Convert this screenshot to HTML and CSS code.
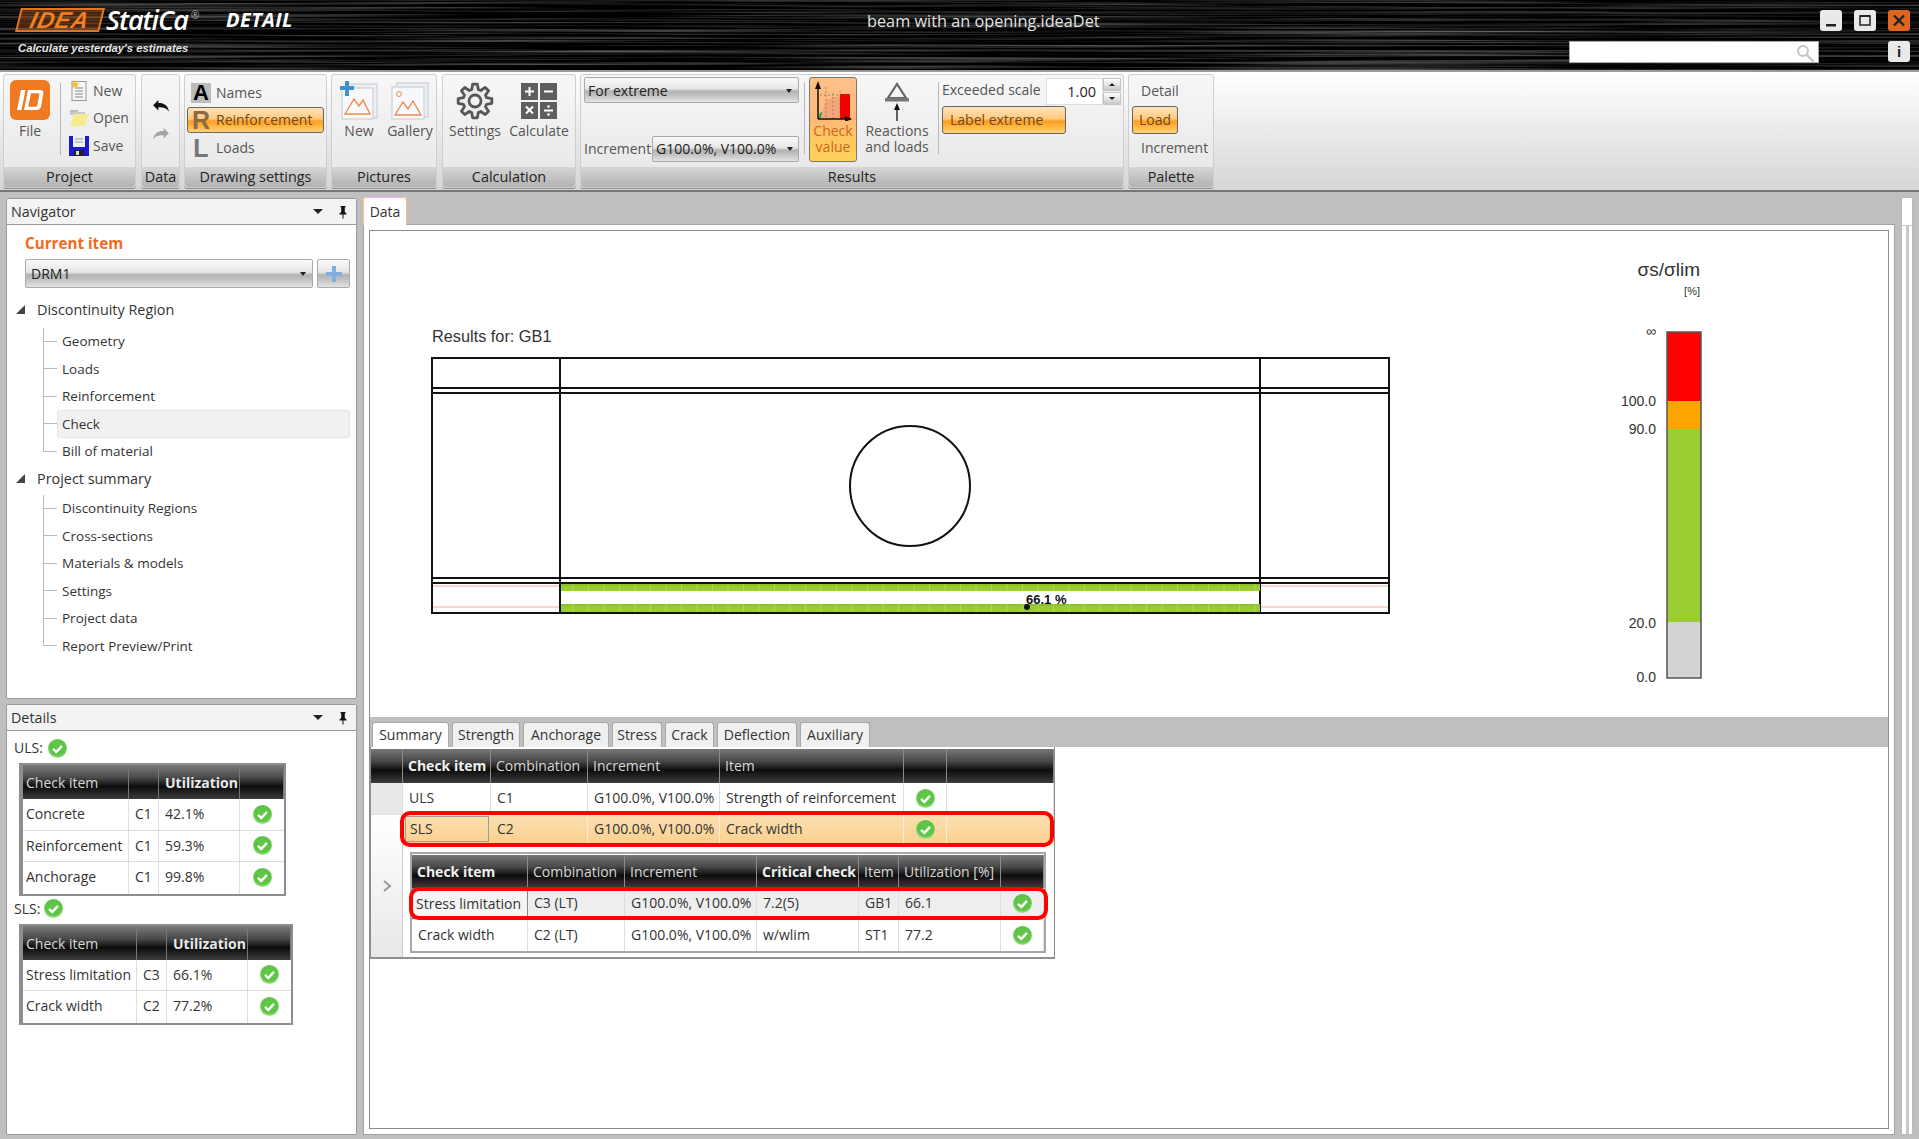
FILE: index.html
```html
<!DOCTYPE html>
<html lang="en">
<head>
<meta charset="utf-8">
<title>beam with an opening.ideaDet</title>
<link rel="stylesheet" href="styles.css">
</head>
<body>
<svg class="defs" width="0" height="0" aria-hidden="true">
  <defs>
    <radialGradient id="okFill" cx="50%" cy="42%" r="58%">
      <stop offset="0" stop-color="#62c74a"/><stop offset=".72" stop-color="#5cc444"/><stop offset="1" stop-color="#a8e298"/>
    </radialGradient>
    <symbol id="ok" viewBox="0 0 20 20">
      <circle cx="10" cy="10" r="10" fill="url(#okFill)"/>
      <path d="M5.300 10.300l3.400 3.400 6-6.500" fill="none" stroke="#fff" stroke-width="2.600"/>
    </symbol>
    <symbol id="pin" viewBox="0 0 10 14">
      <path d="M2.500 1h5v1l-.7.5v4.500l1.700 1.500v1h-3v4h-1v-4h-3v-1l1.700-1.500v-4.500l-.7-.5z" fill="#111"/>
    </symbol>
    <pattern id="bar" width="15.500" height="10" patternUnits="userSpaceOnUse">
      <rect width="15.500" height="10" fill="#9acd32"/>
      <rect y="3" width="15.500" height="3" fill="#8fc02c"/>
      <rect x="15" width=".6" height="10" fill="#c4e28a"/>
    </pattern>
    <filter id="streak" x="0" y="0" width="100%" height="100%" color-interpolation-filters="sRGB">
      <feTurbulence type="fractalNoise" baseFrequency="0.0025 0.42" numOctaves="3" seed="7"/>
      <feColorMatrix type="matrix" values="0.8 0 0 0 -0.34  0.8 0 0 0 -0.34  0.8 0 0 0 -0.34  0 0 0 0 1"/>
    </filter>
  </defs>
</svg>
<div class="app">
  <header class="titlebar">
    <svg class="streaks" width="1919" height="70" aria-hidden="true"><rect width="1919" height="70" filter="url(#streak)"/></svg>
    <div class="brand">
      <div class="brand-top">
        <span class="idea-box"><span class="idea-text">IDEA</span></span>
        <span class="statica">StatiCa<sup class="reg">®</sup></span>
        <span class="detail">DETAIL</span>
      </div>
      <div class="tagline">Calculate yesterday's estimates</div>
    </div>
    <div class="doc-title">beam with an opening.ideaDet</div>
    <div class="window-tools">
      <div class="win-row">
        <span class="win-btn"><svg width="22" height="21" viewBox="0 0 22 21"><rect x="6" y="14" width="10" height="2.500" fill="#222"/></svg></span>
        <span class="win-btn"><svg width="22" height="21" viewBox="0 0 22 21"><rect x="6" y="6" width="10" height="9" fill="none" stroke="#222" stroke-width="1.500"/><rect x="6" y="5" width="10" height="2" fill="#222"/></svg></span>
        <span class="win-btn close"><svg width="22" height="21" viewBox="0 0 22 21"><path d="M6 5.500l10 10M16 5.500l-10 10" stroke="#222" stroke-width="2.400"/></svg></span>
      </div>
      <div class="win-row lower">
        <div class="search"><svg width="22" height="21" viewBox="0 0 22 21"><circle cx="9" cy="9" r="5" fill="none" stroke="#c4c4c4" stroke-width="2"/><path d="M12.500 12.500l7 7" stroke="#c4c4c4" stroke-width="2.200"/></svg></div>
        <span class="win-btn info">i</span>
      </div>
    </div>
  </header>

  <section class="ribbon">
    <div class="group g-project">
      <div class="group-body project-body">
        <div class="file-btn">
          <span class="file-icon"><svg width="30" height="24" viewBox="0 0 30 24"><path d="M6 2h4.500L6.500 22H2zM13 2h12q4 0 3.200 4l-2 12q-.8 4-4.700 4H9zm3 3.200l-2.800 13.600h7.300q1.500 0 1.800-1.500l2-10.500q.3-1.600-1.300-1.600z" fill="#fff"/></svg></span>
          <span class="file-label">File</span>
        </div>
        <div class="vsep project-sep"></div>
        <div class="cmd-list">
          <div class="cmd"><svg width="18" height="22" viewBox="0 0 18 22"><rect x="2" y="1.500" width="14" height="19" fill="#f6f6f6" stroke="#999"/><path d="M5 8h8M5 11h8M5 14h8M5 17h8" stroke="#888"/><path d="M5 0l1.300 3 3 .3-2.300 2 .8 3L5 6.700 2.200 8.300l.8-3-2.300-2 3-.3z" fill="#f6c02c"/></svg><span>New</span></div>
          <div class="cmd"><svg width="20" height="18" viewBox="0 0 20 18"><path d="M1 1h8v3H1z" fill="#bdbdbd"/><path d="M1 3h15v3H1z" fill="#c9c9c9"/><path d="M5 5h15l-4 12H1z" fill="#f7ec8d"/></svg><span>Open</span></div>
          <div class="cmd"><svg width="20" height="20" viewBox="0 0 20 20"><rect width="20" height="20" fill="#1a1ad0"/><rect x="4" y="0" width="12" height="11" fill="#f0f0f0"/><path d="M6 3h8M6 6h8" stroke="#999"/><rect x="5" y="14" width="10" height="6" fill="#222"/><rect x="7" y="15" width="3" height="4" fill="#ddd"/></svg><span>Save</span></div>
        </div>
      </div>
      <div class="group-label">Project</div>
    </div>

    <div class="group g-data">
      <div class="group-body data-body">
        <svg width="18" height="14" viewBox="0 0 20 16"><path d="M1 7l6-6v3.500c7 0 11 3 12 10-2.500-4-6-5-12-5V13z" fill="#111"/></svg>
        <svg width="18" height="14" viewBox="0 0 20 16"><path d="M19 7l-6-6v3.500C6 4.500 2 7.500 1 14.500c2.500-4 6-5 12-5V13z" fill="#a4a4a4"/></svg>
      </div>
      <div class="group-label">Data</div>
    </div>

    <div class="group g-drawing">
      <div class="group-body drawing-body">
        <div class="draw-row"><span class="letter letter-a">A</span><span>Names</span></div>
        <div class="draw-row hot"><span class="letter">R</span><span>Reinforcement</span></div>
        <div class="draw-row"><span class="letter">L</span><span>Loads</span></div>
      </div>
      <div class="group-label">Drawing settings</div>
    </div>

    <div class="group g-pictures">
      <div class="group-body big-row pictures-body">
        <div class="big-btn">
          <svg width="40" height="40" viewBox="0 0 40 40"><rect x="9" y="3" width="29" height="34" fill="#eef0f4" stroke="#c3c8d2"/><rect x="3" y="7" width="31" height="31" fill="#f7f8fa" stroke="#c3c8d2"/><path d="M6 33l9-15 5 7 4-6 7 14z" fill="none" stroke="#ef8a55" stroke-width="1.400"/><path d="M6 6h5V1h4v5h5v4h-5v6h-4v-6H6z" fill="#3f8fcf" transform="translate(-5 -1)"/></svg>
          <span class="big-label">New</span>
        </div>
        <div class="big-btn">
          <svg width="40" height="40" viewBox="0 0 40 40"><rect x="7" y="2" width="31" height="34" fill="#eef0f4" stroke="#c3c8d2"/><rect x="2" y="6" width="32" height="32" fill="#f7f8fa" stroke="#c3c8d2"/><circle cx="9" cy="13" r="2.500" fill="none" stroke="#ef8a55"/><path d="M5 34l8-13 5 7 5-8 8 14z" fill="none" stroke="#ef8a55" stroke-width="1.400"/></svg>
          <span class="big-label">Gallery</span>
        </div>
      </div>
      <div class="group-label">Pictures</div>
    </div>

    <div class="group g-calc">
      <div class="group-body big-row calc-body">
        <div class="big-btn">
          <svg width="40" height="40" viewBox="0 0 40 40"><path d="M16.690 8.460L17.630 3.160H22.370L23.310 8.460 25.820 9.500 30.230 6.420 33.580 9.770 30.500 14.180 31.540 16.690 36.840 17.630V22.370L31.540 23.310 30.500 25.820 33.580 30.230 30.230 33.580 25.820 30.500 23.310 31.540 22.370 36.840H17.630L16.690 31.540 14.180 30.500 9.770 33.580 6.420 30.230 9.500 25.820 8.460 23.310 3.160 22.370V17.630L8.460 16.690 9.500 14.180 6.420 9.770 9.770 6.420 14.180 9.500z" fill="#ececec" stroke="#575757" stroke-width="2.800" stroke-linejoin="round"/><circle cx="20" cy="20" r="6" fill="#f4f4f4" stroke="#575757" stroke-width="2.800"/></svg>
          <span class="big-label">Settings</span>
        </div>
        <div class="big-btn">
          <svg width="40" height="40" viewBox="0 0 40 40"><g fill="#5e5e5e"><rect x="2" y="2" width="17" height="17"/><rect x="21" y="2" width="17" height="17"/><rect x="2" y="21" width="17" height="17"/><rect x="21" y="21" width="17" height="17"/></g><path d="M6 10.500h9M10.500 6v9M25 10.500h9M7 25.500l7 7M14 25.500l-7 7M25 29.500h9" stroke="#fff" stroke-width="2"/><circle cx="29.500" cy="25.500" r="1.300" fill="#fff"/><circle cx="29.500" cy="33.500" r="1.300" fill="#fff"/></svg>
          <span class="big-label">Calculate</span>
        </div>
      </div>
      <div class="group-label">Calculation</div>
    </div>

    <div class="group g-results">
      <div class="group-body results-body">
        <div class="combo-col">
          <div class="combo combo-extreme"><span>For extreme</span><i class="caret"></i></div>
          <div class="inc-row"><span>Increment</span><div class="combo combo-inc"><span>G100.0%, V100.0%</span><i class="caret"></i></div></div>
        </div>
        <div class="vsep result-sep"></div>
        <div class="check-value">
          <svg width="38" height="40" viewBox="0 0 38 40"><path d="M6 32L4 38h7l-1-8z" fill="#12a04a"/><path d="M6 38l6-18 7-4h7v22z" fill="#f4a57a"/><rect x="26" y="13" width="10" height="25" fill="#f00000"/><path d="M6 14h30M12 6v32M19 12v26M26 10v28" stroke="#7a5a40" stroke-width=".6" stroke-dasharray="2 2"/><path d="M4 38V4M4 38h33" stroke="#111" stroke-width="1.500"/><path d="M4 0l-3 8h6zM38 38l-7-3v6z" fill="#111"/></svg>
          <span class="cv-label">Check value</span>
        </div>
        <div class="reactions">
          <svg width="26" height="40" viewBox="0 0 26 40"><path d="M13 2L4 16h18z" fill="none" stroke="#666" stroke-width="2.200"/><rect x="1" y="16" width="24" height="3.500" fill="#777"/><path d="M13 39V24" stroke="#111" stroke-width="1.300"/><path d="M13 21l-3 7h6z" fill="#111"/></svg>
          <span class="reactions-label">Reactions and loads</span>
        </div>
        <div class="vsep react-sep"></div>
        <div class="exceed">
          <div class="exceed-top">
            <span class="exceed-label">Exceeded scale</span>
            <div class="scale-input">1.00</div>
            <div class="spinner"><span class="spin"><i class="tri up"></i></span><span class="spin"><i class="tri"></i></span></div>
          </div>
          <div class="hot-btn label-extreme">Label extreme</div>
        </div>
      </div>
      <div class="group-label">Results</div>
    </div>

    <div class="group g-palette">
      <div class="group-body palette-body">
        <span class="pal-text">Detail</span>
        <div class="hot-btn load-btn">Load</div>
        <span class="pal-text">Increment</span>
      </div>
      <div class="group-label">Palette</div>
    </div>
  </section>

  <main class="workspace">
    <aside class="side">
      <section class="panel nav-panel">
        <div class="panel-head"><span>Navigator</span><i class="tri head-tri"></i><svg class="pin" width="10" height="14"><use href="#pin"/></svg></div>
        <div class="nav-body">
          <div class="current">Current item</div>
          <div class="current-row">
            <div class="combo combo-drm"><span>DRM1</span><i class="caret"></i></div>
            <div class="combo add-btn"><svg width="16" height="16" viewBox="0 0 16 16"><path d="M6 0h4v6h6v4h-6v6H6v-6H0V6h6z" fill="#7fb0e0"/></svg></div>
          </div>
          <div class="tree-head"><i class="expander"></i><span>Discontinuity Region</span></div>
          <ul class="tree-list">
            <li class="tree-item"><span>Geometry</span></li>
            <li class="tree-item"><span>Loads</span></li>
            <li class="tree-item"><span>Reinforcement</span></li>
            <li class="tree-item selected"><span>Check</span></li>
            <li class="tree-item last"><span>Bill of material</span></li>
          </ul>
          <div class="tree-head second"><i class="expander"></i><span>Project summary</span></div>
          <ul class="tree-list summary-list">
            <li class="tree-item"><span>Discontinuity Regions</span></li>
            <li class="tree-item"><span>Cross-sections</span></li>
            <li class="tree-item"><span>Materials &amp; models</span></li>
            <li class="tree-item"><span>Settings</span></li>
            <li class="tree-item"><span>Project data</span></li>
            <li class="tree-item last"><span>Report Preview/Print</span></li>
          </ul>
        </div>
      </section>
      <section class="panel details-panel">
        <div class="panel-head"><span>Details</span><i class="tri head-tri"></i><svg class="pin" width="10" height="14"><use href="#pin"/></svg></div>
        <div class="details-body">
          <div class="status">ULS: <svg class="ok big" width="19" height="19"><use href="#ok"/></svg></div>
          <div class="mini uls">
            <div class="mini-row head"><span>Check item</span><span></span><b>Utilization</b><span></span></div>
            <div class="mini-row"><span>Concrete</span><span class="c">C1</span><span>42.1%</span><span class="mid"><svg width="19" height="19"><use href="#ok"/></svg></span></div>
            <div class="mini-row"><span>Reinforcement</span><span class="c">C1</span><span>59.3%</span><span class="mid"><svg width="19" height="19"><use href="#ok"/></svg></span></div>
            <div class="mini-row"><span>Anchorage</span><span class="c">C1</span><span>99.8%</span><span class="mid"><svg width="19" height="19"><use href="#ok"/></svg></span></div>
          </div>
          <div class="status sls-status">SLS: <svg class="ok big" width="19" height="19"><use href="#ok"/></svg></div>
          <div class="mini sls">
            <div class="mini-row head"><span>Check item</span><span></span><b>Utilization</b><span></span></div>
            <div class="mini-row"><span>Stress limitation</span><span class="c">C3</span><span>66.1%</span><span class="mid"><svg width="19" height="19"><use href="#ok"/></svg></span></div>
            <div class="mini-row"><span>Crack width</span><span class="c">C2</span><span>77.2%</span><span class="mid"><svg width="19" height="19"><use href="#ok"/></svg></span></div>
          </div>
        </div>
      </section>
    </aside>

    <div class="center">
      <div class="data-tab">Data</div>
      <div class="data-frame">
        <div class="data-inner">
          <svg class="chart" width="1518" height="486" viewBox="370 231 1518 486">
            <text x="432" y="342" class="t-results">Results for: GB1</text>
            <g fill="none" stroke="#111" stroke-width="2">
              <rect x="432" y="358" width="957" height="255"/>
              <path d="M560 358V613M1260 358V613M432 388H1389M432 393H1389M432 578H1389M432 583H1389"/>
              <circle cx="910" cy="486" r="60"/>
            </g>
            <path d="M433 586H559M433 607H559M1261 586H1388M1261 607H1388" stroke="#f4c8c8" stroke-width="1.500"/>
            <rect x="561" y="584" width="699" height="7" fill="url(#bar)"/>
            <rect x="561" y="604" width="699" height="8" fill="url(#bar)"/>
            <circle cx="1027" cy="607" r="3" fill="#111"/>
            <text x="1026" y="604" class="t-extreme">66.1 %</text>
            <text x="1700" y="276" text-anchor="end" class="t-legend">σs/σlim</text>
            <text x="1700" y="295" text-anchor="end" class="t-unit">[%]</text>
            <g class="t-scale" text-anchor="end">
              <text x="1656" y="336">∞</text>
              <text x="1656" y="406">100.0</text>
              <text x="1656" y="434">90.0</text>
              <text x="1656" y="628">20.0</text>
              <text x="1656" y="682">0.0</text>
            </g>
            <rect x="1667" y="332" width="34" height="69" fill="#ff0000"/>
            <rect x="1667" y="401" width="34" height="28" fill="#ffa500"/>
            <rect x="1667" y="429" width="34" height="193" fill="#9acd32"/>
            <rect x="1667" y="622" width="34" height="56" fill="#d3d3d3"/>
            <rect x="1667" y="332" width="34" height="346" fill="none" stroke="#555" stroke-width="1.500"/>
          </svg>
          <nav class="tabs">
            <span class="tab active">Summary</span>
            <span class="tab t-strength">Strength</span>
            <span class="tab t-anchorage">Anchorage</span>
            <span class="tab t-stress">Stress</span>
            <span class="tab t-crack">Crack</span>
            <span class="tab t-deflection">Deflection</span>
            <span class="tab t-auxiliary">Auxiliary</span>
          </nav>
          <div class="grid-area">
            <div class="grid">
              <div class="g-row g-head g-top"><span></span><b>Check item</b><span>Combination</span><span>Increment</span><span>Item</span><span></span><span></span></div>
              <div class="g-row g-body"><span class="row-handle"></span><span>ULS</span><span>C1</span><span>G100.0%, V100.0%</span><span>Strength of reinforcement</span><span class="mid"><svg width="19" height="19"><use href="#ok"/></svg></span><span></span></div>
              <div class="g-expanded">
                <div class="expand-cell"><svg width="10" height="14" viewBox="0 0 10 14"><path d="M2 2l6 5-6 5" fill="none" stroke="#999" stroke-width="2"/></svg></div>
                <div class="expand-main">
                  <div class="g-row g-sel"><span class="sel-cell">SLS</span><span>C2</span><span>G100.0%, V100.0%</span><span>Crack width</span><span class="mid"><svg width="19" height="19"><use href="#ok"/></svg></span><span></span></div>
                  <div class="nested">
                    <div class="n-row g-head"><b>Check item</b><span>Combination</span><span>Increment</span><b>Critical check</b><span>Item</span><span>Utilization [%]</span><span></span></div>
                    <div class="n-row g-body n-sel"><span class="sel-cell">Stress limitation</span><span>C3 (LT)</span><span>G100.0%, V100.0%</span><span>7.2(5)</span><span>GB1</span><span>66.1</span><span class="mid"><svg width="19" height="19"><use href="#ok"/></svg></span></div>
                    <div class="n-row g-body n-last"><span>Crack width</span><span>C2 (LT)</span><span>G100.0%, V100.0%</span><span>w/wlim</span><span>ST1</span><span>77.2</span><span class="mid"><svg width="19" height="19"><use href="#ok"/></svg></span></div>
                  </div>
                </div>
              </div>
              <div class="red-box box-sls"></div>
              <div class="red-box box-stress"></div>
            </div>
          </div>
        </div>
      </div>
    </div>
    <div class="scrollbar"><span class="thumb"></span><span class="track-line"></span></div>
  </main>
</div>
</body>
</html>
```

FILE: styles.css
```css
* { box-sizing: border-box; }
html, body { margin: 0; padding: 0; }
body { background: #bfbfbf; font: 14px/18px "Open Sans", "Liberation Sans", sans-serif; color: #333; overflow: hidden; }
.defs { position: absolute; }
i { display: block; }
ul { list-style: none; margin: 0; padding: 0; }
svg { display: block; flex: none; }
.app { width: 1919px; height: 1139px; display: flex; flex-direction: column; overflow: hidden; }

/* title bar */
.titlebar { height: 72px; flex: none; display: flex; position: relative; border-bottom: 2px solid #9b9b9b; color: #f0f0f0; background: #0c0c0c; }
.streaks { position: absolute; left: 0; top: 0; }
.brand, .doc-title, .window-tools { position: relative; }
.brand { width: 867px; flex: none; padding: 8px 0 0 18px; }
.brand-top { display: flex; align-items: center; height: 24px; }
.idea-box { width: 84px; height: 24px; border: 2px solid #e8731f; transform: skewX(-14deg); display: flex; align-items: center; justify-content: center; background: rgba(232,115,31,.3); }
.idea-text { font: italic 900 23px/20px "Liberation Sans", sans-serif; letter-spacing: 1px; color: #f08024; }
.statica { font: italic 600 27px/24px "Open Sans", sans-serif; color: #fff; margin-left: 4px; letter-spacing: -1px; width: 120px; white-space: nowrap; }
.reg { font-size: 10px; line-height: 0; vertical-align: 11px; color: #bbb; margin-left: 3px; font-weight: 400; }
.detail { font: italic 700 20px/24px "Open Sans", sans-serif; color: #fff; letter-spacing: .4px; }
.tagline { margin-top: 9px; font: italic 700 11.3px/14px "Liberation Sans", sans-serif; color: #e6e6e6; }
.doc-title { width: 400px; flex: none; padding-top: 12px; font-size: 16.3px; color: #e4e4e4; white-space: nowrap; }
.window-tools { flex: 1; padding: 10px 9px 0 0; display: flex; flex-direction: column; align-items: flex-end; }
.win-row { display: flex; gap: 12px; }
.win-row.lower { margin-top: 10px; gap: 69px; }
.win-btn { width: 22px; height: 21px; background: #e9e9e9; border-radius: 3px; }
.win-btn.close { background: #e0651f; }
.win-btn.info { font: 700 15px/21px "Liberation Sans", sans-serif; text-align: center; color: #222; }
.search { width: 250px; height: 22px; background: #fff; border: 1px solid #aaa; display: flex; justify-content: flex-end; padding-right: 2px; }

/* ribbon */
.ribbon {
  height: 120px; flex: none; display: flex; padding: 2px 0 0 3px; border-bottom: 2px solid #777;
  background: linear-gradient(#fff, #d6d6d6);
}
.group { height: 114px; display: flex; flex-direction: column; flex: none; background: linear-gradient(#f7f7f7, #e6e6e6); border: 1px solid #cfcfcf; border-radius: 3px; box-shadow: 0 1px 0 #8c8c8c; margin-right: 4px; color: #555; }
.group-body { flex: 1; min-height: 0; }
.group-label { height: 20px; flex: none; text-align: center; font-size: 14.4px; line-height: 20px; color: #222; background: linear-gradient(#d6d6d6, #b2b2b2); border-radius: 0 0 3px 3px; white-space: nowrap; }
.g-project { width: 133px; margin-right: 5px; }
.g-data { width: 39px; }
.g-drawing { width: 143px; margin-right: 4px; }
.g-pictures { width: 106px; margin-right: 5px; }
.g-calc { width: 134px; }
.g-results { width: 544px; }
.g-palette { width: 86px; }
.vsep { width: 1px; background: #b8b8b8; flex: none; }

.project-body { display: flex; padding: 5px 0 0 6px; }
.file-btn { width: 40px; display: flex; flex-direction: column; align-items: center; }
.file-icon { width: 40px; height: 40px; border-radius: 6px; background: #f07a22; display: flex; align-items: center; justify-content: center; }
.file-label { margin-top: 2px; line-height: 18px; }
.project-sep { height: 72px; margin: 3px 8px 0 10px; }
.cmd-list { display: flex; flex-direction: column; margin-top: -3px; }
.cmd { height: 27.5px; display: flex; align-items: center; gap: 4px; }
.cmd svg { width: 20px; }

.data-body { display: flex; flex-direction: column; align-items: center; padding-top: 24px; gap: 14px; }

.drawing-body { padding: 5px 2px 0 2px; display: flex; flex-direction: column; gap: 1px; }
.draw-row { height: 26px; display: flex; align-items: center; padding-left: 3px; gap: 5px; border: 1px solid transparent; border-radius: 2px; }
.draw-row:last-child { margin-top: 1px; }
.letter { width: 20px; font: 700 25px/24px "Liberation Sans", sans-serif; color: #777; text-align: center; }
.letter-a { color: #000; background: #bcbcbc; height: 20px; font-size: 22px; line-height: 20px; }
.hot, .hot-btn {
  background: linear-gradient(#ffe3b8 0, #ffc980 45%, #ff9d22 55%, #ffb038 70%, #ffd277 100%);
  border: 1px solid #666; border-radius: 3px; color: #6a4a20;
}
.hot .letter { color: #8c6a44; }

.big-row { display: flex; padding-top: 6px; }
.pictures-body { padding-left: 3px; gap: 3px; }
.calc-body { padding-left: 1px; gap: 2px; }
.big-btn { width: 48px; display: flex; flex-direction: column; align-items: center; white-space: nowrap; }
.calc-body .big-btn { width: 62px; }
.big-label { margin-top: 1px; }

.results-body { display: flex; padding: 2px 0 0 3px; }
.combo-col { width: 215px; height: 85px; flex: none; display: flex; flex-direction: column; justify-content: space-between; }
.combo {
  display: flex; align-items: center; justify-content: space-between; padding: 0 6px 0 3px; color: #222; border: 1px solid #aaa; border-radius: 2px;
  background: linear-gradient(#fafafa 0, #e6e6e6 45%, #b2b2b2 55%, #c4c4c4 75%, #e4e4e4 100%);
}
.combo-extreme { height: 26px; padding-top: 1px; }
.combo-inc { width: 147px; height: 26px; padding-right: 5px; white-space: nowrap; }
.combo-drm { padding-left: 5px; }
.inc-row { display: flex; align-items: center; justify-content: space-between; white-space: nowrap; }
.caret { width: 0; height: 0; border: 3px solid transparent; border-top: 4px solid #222; border-bottom: 0; flex: none; }
.result-sep { height: 72px; margin: 5px 4px 0 5px; }
.check-value { width: 48px; height: 85px; flex: none; display: flex; flex-direction: column; align-items: center; padding-top: 3px; background: linear-gradient(#ffc08a 0, #ffb878 50%, #ffc860 75%, #ffd25a 100%); border: 1px solid #7a7a6a; border-radius: 3px; }
.cv-label { width: 46px; margin-top: 2px; line-height: 15.500px; text-align: center; color: #c9681c; }
.reactions { width: 72px; margin-left: 4px; flex: none; display: flex; flex-direction: column; align-items: center; padding-top: 5px; }
.reactions-label { width: 72px; margin-top: 1px; line-height: 15.500px; text-align: center; }
.react-sep { height: 72px; margin: 5px 3px 0 5px; }
.exceed { flex: none; }
.exceed-top { display: flex; height: 28px; align-items: center; white-space: nowrap; }
.exceed-label { width: 104px; margin-top: -3px; }
.scale-input { width: 57px; height: 27px; background: #fff; border: 1px solid #ddd; text-align: right; padding-right: 6px; line-height: 26px; color: #222; font-size: 14.500px; }
.spinner { width: 18px; height: 27px; display: flex; flex-direction: column; gap: 1px; }
.spin { flex: 1; background: linear-gradient(#fff, #c8c8c8); border: 1px solid #c4c4c4; display: flex; align-items: center; justify-content: center; }
.tri { width: 0; height: 0; border: 4px solid transparent; border-top: 4px solid #222; border-bottom: 0; flex: none; }
.tri.up { border-top: 0; border-bottom: 4px solid #222; }
.spin .tri { border-width: 3px; border-top-width: 3px; }
.spin .tri.up { border-top-width: 0; }
.spin .tri:not(.up) { border-bottom-width: 0; }
.hot-btn { height: 28px; line-height: 26px; }
.label-extreme { width: 124px; margin-top: 1px; padding-left: 7px; }

.palette-body { display: flex; flex-direction: column; padding: 4px 0 0 3px; white-space: nowrap; }
.pal-text { padding-left: 9px; height: 27px; line-height: 24px; }
.load-btn { width: 46px; text-align: center; }
.palette-body .pal-text:last-child { line-height: 28px; }

/* workspace */
.workspace { flex: 1; min-height: 0; display: flex; padding: 5px 0 4px 6px; background: #bfbfbf; }
.side { width: 351px; flex: none; display: flex; flex-direction: column; gap: 5px; padding-top: 1px; }
.panel { background: #fff; border: 1px solid #9a9a9a; display: flex; flex-direction: column; border-radius: 2px; }
.nav-panel { height: 501px; flex: none; }
.details-panel { flex: 1; min-height: 0; }
.panel-head { height: 26px; flex: none; display: flex; align-items: center; padding: 0 8px 0 4px; background: #f3f3f3; border-bottom: 1px solid #9a9a9a; color: #333; font-size: 14.3px; }
.head-tri { margin-left: auto; border-width: 5px; border-top-width: 5px; border-bottom-width: 0; }
.pin { margin-left: 15px; }

.nav-body { padding: 8px 6px 0 9px; }
.current { font-size: 15.2px; line-height: 20px; font-weight: 700; color: #f26a21; padding-left: 9px; }
.current-row { display: flex; gap: 4px; margin: 6px 0 0 9px; }
.combo-drm { width: 288px; height: 29px; }
.add-btn { width: 33px; height: 29px; justify-content: center; padding: 0; }
.tree-head { display: flex; align-items: center; height: 27.5px; margin-top: 8px; font-size: 14.4px; }
.tree-head.second { margin-top: 0; }
.expander { width: 0; height: 0; border-style: solid; border-width: 0 0 9px 9px; border-color: transparent transparent #444; margin-right: 12px; }
.tree-list { margin: 4px 0 0 27px; }
.summary-list { margin-top: 2px; }
.tree-item { height: 27.5px; display: flex; align-items: center; background: linear-gradient(#bbb, #bbb) 0 0/1px 100% no-repeat; font-size: 13.5px; }
.tree-item.last { background-size: 1px 50%; }
.tree-item::before { content: ""; width: 14px; height: 1px; background: #bbb; flex: none; }
.tree-item span { flex: 1; padding-left: 5px; line-height: 26px; }
.tree-item.selected span { height: 28px; background: #f1f1f1; border: 1px solid #e6e6e6; border-radius: 2px; padding-left: 4px; }

.details-body { padding: 7px 0 0 7px; }
.status { height: 20px; display: flex; align-items: center; gap: 5px; color: #333; }
.sls-status { margin-top: 3px; gap: 4px; }
.mini { margin: 5px 0 0 5px; border: 2px solid #8e8e8e; border-left-width: 4px; }
.sls { margin-top: 5px; }
.mini-row { display: grid; height: 31.5px; border-bottom: 1px solid #ddd; white-space: nowrap; }
.uls { width: 267px; }
.uls .mini-row { grid-template-columns: 106px 30px 81px 1fr; }
.sls { width: 274px; }
.sls .mini-row { grid-template-columns: 114px 30px 81px 1fr; }
.mini-row > * { padding-left: 3px; line-height: 30px; border-right: 1px solid #ddd; font-weight: 400; }
.mini-row > *:nth-child(3) { padding-left: 6px; }
.mini-row > .c { padding-left: 6px; }
.mini-row > :last-child { border-right: 0; }
.mini-row:last-child { border-bottom: 0; }
.mini-row.head { height: 34px; border-bottom: 0; }
.mini-row.head > * { line-height: 33px; color: #d8d8d8; border: 1px solid #777; border-width: 1px 1px 0 0; background: linear-gradient(#767676, #4a4a4a 35%, #0c0c0c 62%, #3c3c3c); }
.mini-row.head > b { font-weight: 700; color: #e8e8e8; }
.mid { display: flex; align-items: center; justify-content: center; padding: 0 !important; }

.center { width: 1532px; flex: none; display: flex; flex-direction: column; margin-left: 6px; }
.data-tab { width: 44px; height: 28px; flex: none; margin-bottom: -1px; position: relative; background: #fff; border: 1px solid #f3c67e; border-bottom: 0; border-radius: 3px 3px 0 0; text-align: center; line-height: 27px; color: #333; }
.data-frame { flex: 1; min-height: 0; background: #fff; border: 1px solid #a2a2a2; padding: 5px; }
.data-inner { height: 100%; border: 1px solid #8c8c8c; display: flex; flex-direction: column; }
.chart { flex: none; }
.chart text { font-family: "Liberation Sans", sans-serif; fill: #333; }
.t-results { font-size: 16.300px; }
.t-legend { font-size: 19px; }
.t-unit { font-size: 11px; }
.t-scale { font-size: 14px; }
.t-extreme { font-size: 13px; font-weight: 700; fill: #111 !important; }

.tabs { height: 30px; flex: none; display: flex; align-items: flex-end; padding-left: 2px; gap: 3px; background: #bfbfbf; }
.tab { width: 68px; height: 25px; flex: none; background: #f0f0f0; border: 1px solid #a8a8a8; border-bottom: 0; border-radius: 3px 3px 0 0; text-align: center; line-height: 24px; white-space: nowrap; }
.tab.active { width: 77px; background: #fff; }
.t-anchorage { width: 86px; }
.t-stress { width: 50px; }
.t-crack { width: 49px; }
.t-deflection { width: 80px; }
.t-auxiliary { width: 70px; }

.grid-area { flex: 1; min-height: 0; background: #fff; }
.grid { width: 685px; position: relative; border: 1px solid #8e8e8e; border-top: 0; border-bottom-width: 2px; background: #fff; }
.g-row { display: grid; grid-template-columns: 32px 88px 97px 132px 184px 43px 1fr; white-space: nowrap; }
.g-head { height: 33px; padding-top: 1px; }
.g-top { height: 36px; padding-top: 2px; }
.g-top > * { line-height: 34px; }
.g-head > * { padding-left: 5px; color: #d8d8d8; font-weight: 400; border-right: 1px solid #8a8a8a; background: linear-gradient(#767676, #4a4a4a 35%, #0c0c0c 62%, #3c3c3c); }
.g-head > b { font-weight: 700; color: #f0f0f0; }
.g-body { height: 32px; border-bottom: 1px solid #e0e0e0; }
.g-body > * { padding-left: 6px; line-height: 30px; border-right: 1px solid #ddd; }
.row-handle { background: #e8e8e8; }
.g-expanded { display: flex; }
.expand-cell { width: 32px; flex: none; display: flex; align-items: center; justify-content: center; background: linear-gradient(#fff, #e8e8e8); border-right: 1px solid #ccc; }
.expand-main { flex: 1; min-width: 0; }
.g-sel { height: 31px; grid-template-columns: 88px 97px 132px 184px 43px 1fr; background: linear-gradient(#fbe0b2, #fcd08f); border-bottom: 3px solid #fff3dc; }
.g-sel > * { padding-left: 6px; line-height: 28px; border-right: 1px solid #f3ecdf; }
.g-sel .sel-cell { border: 1px solid #9c9c9c; margin: 1px 2px 2px 2px; padding-left: 4px; line-height: 24px; }
.nested { margin: 6px 8px 4px 7px; width: 636px; border: 2px solid #a8a8a8; }
.n-row { display: grid; grid-template-columns: 116px 97px 132px 102px 40px 102px 1fr; white-space: nowrap; }
.n-row.g-head { height: 34px; }
.n-row.g-head > * { line-height: 33px; }
.n-row.g-body { height: 32px; }
.n-row.n-last { height: 31px; border-bottom: 0; }
.n-sel { background: #eeeeee; }
.n-sel .sel-cell { background: #f4f4f4; border: 1px solid #888; padding-left: 3px; line-height: 29px; }
.red-box { position: absolute; border: 4px solid #ff0000; border-radius: 10px; pointer-events: none; }
.box-sls { left: 29px; top: 64px; width: 654px; height: 36px; }
.box-stress { left: 38px; top: 140px; width: 639px; height: 33px; }

.scrollbar { width: 12px; flex: none; margin: 0 0 0 6px; position: relative; background: #fff; border: 1px solid #bbb; border-radius: 2px; display: flex; flex-direction: column; align-items: center; }
.thumb { width: 100%; height: 28px; flex: none; background: #fff; border-bottom: 1px solid #ccc; }
.track-line { width: 3px; flex: 1; background: #c8c8c8; }
```
